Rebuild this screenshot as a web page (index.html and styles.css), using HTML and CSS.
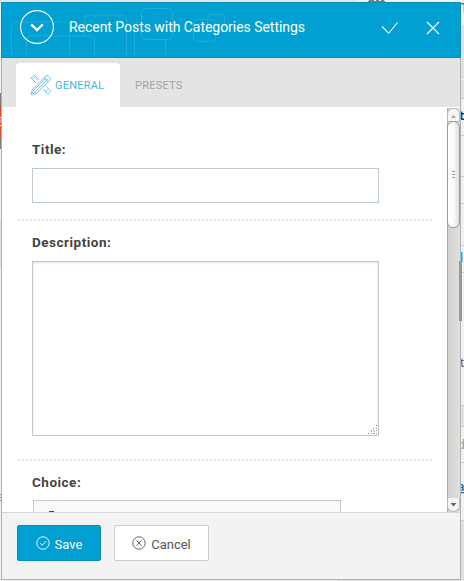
FILE: index.html
```html
<!DOCTYPE html>
<html lang="en">
<head>
<meta charset="utf-8">
<title>Recent Posts with Categories Settings</title>
<link rel="stylesheet" href="styles.css">
</head>
<body>
<svg class="backdrop" width="464" height="581" shape-rendering="crispEdges">
  <rect width="464" height="581" fill="#f1f1f1"/>
  <path fill="#e5e5e5" d="M0 0h357v2H0z"/>
  <path fill="#7b7b7b" d="M369 0h5v1h-5zM376 0h3v1h-3zM381 0h3v1h-3zM368 1h17v1h-17zM0 93h1v56H0z"/>
  <path fill="#dd5027" d="M0 105h1v32H0z"/>
  <path fill="#d38ab5" d="M0 119h1v4H0z"/>
  <path fill="#fff" d="M0 117h1v1H0zM0 125h1v1H0z"/>
  <path fill="#888" d="M0 494h1v1H0zM0 497h1v1H0zM0 500h1v1H0z"/>
  <path fill="#e1e1e1" d="M0 220h1v48H0zM461 26h3v51h-3zM461 80h3v18h-3zM461 406h3v20h-3zM461 521h3v60h-3zM337 580h127v1H337z"/>
  <path fill="#cfcfcf" d="M461 26h3v1h-3zM461 77h3v1h-3zM461 98h3v1h-3zM461 135h3v1h-3zM461 176h3v1h-3zM461 203h3v1h-3zM461 245h3v1h-3zM461 272h3v1h-3zM461 405h3v1h-3zM461 426h3v1h-3zM461 462h3v1h-3zM461 520h3v1h-3z"/>
  <g font-family="Open Sans, sans-serif" font-size="13">
    <text x="461" y="12" fill="#9a553b" font-weight="700">T</text>
    <text x="459" y="120" fill="#123d5d" font-weight="700">t</text>
    <text x="460" y="262" fill="#2478a8">l</text>
    <text x="460" y="367" fill="#8a4938">t</text>
    <text x="457" y="449" fill="#999">d</text>
    <text x="457" y="491" fill="#0073aa" font-weight="600" text-decoration="underline">a</text>
  </g>
</svg>
<main class="dialog">
  <header class="header">
    <svg class="pattern" width="240" height="54" fill="none" stroke="#1eacd9">
      <path d="M10.500 53V24q0-4 4-4h50q4 0 4 4v29M25.500 53V38q0-4 4-4h60q4 0 4 4v15M83.500 34V17q0-4 4-4h34q4 0 4 4v36M133.500 53V24q0-4-4-4h-4"/>
      <rect x="140.500" y="6.500" width="31" height="31" rx="4"/>
      <rect x="192.500" y="17.500" width="22" height="22" rx="4"/>
      <rect x="206.500" y="12.500" width="17" height="17" rx="4"/>
      <path d="M164.500 37v16"/>
    </svg>
    <svg class="toggle" width="36" height="36" fill="none" stroke="#fff">
      <circle cx="18" cy="18" r="16.400" stroke-width="1.100"/>
      <path d="M12.200 15.400l5.800 5.700 5.800-5.700" stroke-width="2.200"/>
    </svg>
    <h1 class="heading">Recent Posts with Categories Settings</h1>
    <svg class="check" width="18" height="14" fill="none" stroke="#fff" stroke-width="1.100"><path d="M1 5.500l6.700 6.800L16.500 1.500"/></svg>
    <svg class="close" width="14" height="14" fill="none" stroke="#fff" stroke-width="1.100"><path d="M1 1l12 12M13 1L1 13"/></svg>
  </header>
  <nav class="tabs">
    <a class="tab active">
      <svg width="22" height="22" viewBox="0 0 22 22" fill="none" stroke="#4fc0e8" stroke-width=".85">
        <path d="M4.200 1.100L1.200 4.100l3 3M4.200 1.100l4.700 4.700M1.200 4.100l5.200 5.200M3.500 3.700l1 1M5.500 2.600L4.200 4M7.400 4.600L6.200 5.900M13.200 15.500l4.700 4.800 3-3-5.100-5.200M15.500 17.900l1.300-1.300M17.500 15.900l-1.300 1.300M14 16.300l1.200-1.200"/>
        <path fill="#fff" d="M1 20.700l1.400-5.300L15.700 2.100q1.400-1.400 2.800 0l1.400 1.400q1.400 1.400 0 2.800L6.500 19.400z"/>
        <path d="M2.400 15.400l4.100 4M4 15.900L16.300 3.600M5.500 17.400L18 5M14 3.800l4.200 4.200M2 18l1.800 1.800"/>
      </svg>
      <span>GENERAL</span>
    </a>
    <a class="tab">PRESETS</a>
  </nav>
  <section class="body">
    <form class="fields">
      <div class="field title"><label>Title:</label><div class="input"></div></div>
      <div class="field description"><label>Description:</label>
        <div class="textarea"><svg width="10" height="10" fill="#999" shape-rendering="crispEdges"><path d="M8 0h1v1H8zM8 3h1v1H8zM8 5h1v1H8zM8 8h1v1H8zM5 3h1v1H5zM5 5h1v1H5zM5 8h1v1H5zM3 5h1v1H3zM3 6h1v1H3zM3 8h1v1H3zM0 8h1v1H0zM6 6h1v1H6zM6 8h1v1H6z"/></svg></div>
      </div>
      <div class="field choice"><label>Choice:</label><div class="select"><i></i></div></div>
    </form>
    <div class="scrollbar">
      <div class="arrow up"><svg width="7" height="4"><path fill="#aaa" d="M1 4l2.500-3L6 4z"/></svg></div>
      <div class="thumb"><i></i><i></i><i></i></div>
      <div class="arrow down"><svg width="7" height="4"><path fill="#666" d="M.5 0l3 3.500 3-3.500z"/></svg></div>
    </div>
  </section>
  <footer class="footer">
    <button class="button save"><svg width="14" height="14" fill="none" stroke="currentColor" stroke-width=".9"><circle cx="7" cy="7" r="6.200"/><path d="M4 7l2.200 2.200L10.300 5"/></svg><span>Save</span></button>
    <button class="button cancel"><svg width="14" height="14" fill="none" stroke="currentColor" stroke-width=".9"><circle cx="7" cy="7" r="6.200"/><path d="M4.500 4.500l5 5M9.500 4.500l-5 5"/></svg><span>Cancel</span></button>
  </footer>
  <div class="page-thumb"></div>
</main>
</body>
</html>
```
FILE: styles.css
```css
* { box-sizing: border-box; }
body { margin: 0; width: 464px; height: 581px; overflow: hidden; font-family: Roboto, "Liberation Sans", sans-serif; }
.backdrop { position: absolute; top: 0; left: 0; }
.dialog { position: relative; width: 460px; height: 578px; margin: 2px 0 0 1px; display: flex; flex-direction: column; border: 1px solid #adb2b9; border-top: 0; background: #fff; }
.header { position: relative; height: 56px; flex: none; margin: 0 -1px; display: flex; align-items: center; padding: 0 20px 6px 18px; background: #00a0d2; border: 1px solid #0890bd; }
.pattern { position: absolute; left: -1px; top: -1px; }
.toggle { position: relative; left: -1px; flex: none; }
.heading { position: relative; margin: 0 auto 0 13px; font-size: 14px; font-weight: 400; line-height: 20px; letter-spacing: -.04px; color: #fff; white-space: nowrap; }
.check { margin: 2px 27px 0 0; }
.close { margin-top: 2px; }
.tabs { height: 49px; flex: none; display: flex; align-items: flex-end; padding-left: 14px; background: #e4e4e4; }
.tab { height: 44px; display: flex; align-items: center; gap: 3px; padding: 0 15px; font-size: 11px; letter-spacing: .22px; color: #a3a3a3; }
.tab.active { width: 104px; padding: 0 0 0 14px; border-radius: 4px 4px 0 0; background: #fff; color: #46b8e0; }
.body { height: 405px; flex: none; display: flex; justify-content: space-between; overflow: hidden; }
.fields { width: 415px; margin-left: 16px; }
.field { padding-left: 14px; background: repeating-linear-gradient(90deg, #e4e4e4 0 2px, transparent 2px 4px) bottom / 100% 2px no-repeat; }
.field label { display: block; font-size: 13.5px; line-height: 16px; font-weight: 700; letter-spacing: .5px; color: #444; }
.title { height: 114px; padding-top: 34px; }
.input { width: 347px; height: 35px; margin-top: 11px; border: 1px solid #bdc8d0; }
.description { height: 240px; padding-top: 13px; }
.textarea { width: 347px; height: 175px; margin-top: 11px; display: flex; justify-content: flex-end; align-items: flex-end; border: 1px solid #c4c6c8; box-shadow: inset 0 1px 3px #e4e4e4; }
.choice { padding-top: 13px; background: none; }
.select { width: 308px; height: 30px; margin: 10px 0 0 1px; padding: 10px 0 0 15px; border: 1px solid #bdc8d0; background: #fafafa; }
.select i { display: block; width: 5px; height: 1px; background: #444; }
.scrollbar { width: 13px; height: 404px; margin-top: 1px; display: flex; flex-direction: column; border-left: 1px solid #aaa9a5; background: linear-gradient(90deg, #d2d1cf, #e2e0de); }
.arrow { height: 13px; flex: none; display: flex; align-items: center; justify-content: center; border: 1px solid #bcbab6; background: #f5f5f4; }
.up { height: 14px; margin: 0 0 -1px -1px; padding-top: 1px; border-radius: 6px 6px 0 0; }
.down { margin: auto 0 0 -1px; height: 14px; border-radius: 0 0 6px 6px; border-top: 0; }
.thumb { height: 107px; flex: none; margin-left: -1px; display: flex; flex-direction: column; align-items: center; justify-content: center; gap: 2px; border: 1px solid #999; border-radius: 6px; background: linear-gradient(90deg, #fff, #fafafa 50%, #dededc); }
.thumb i { width: 3px; height: 1px; background: #999; }
.footer { flex: 1; display: flex; align-items: flex-start; gap: 13px; padding: 12px 15px; border-top: 1px solid #d8d8d8; background: #f3f3f3; }
.button { height: 36px; display: flex; align-items: center; justify-content: center; gap: 5px; padding: 0; border: 1px solid #ccc; border-radius: 2px; font-family: Roboto, "Liberation Sans", sans-serif; font-size: 13px; color: #555; background: #fff; }
.button span { padding-top: 2px; }
.save { width: 84px; border-color: #0890bd; background: #00a0d2; color: #fff; }
.cancel { width: 95px; }
.page-thumb { position: absolute; top: 259px; right: -2px; width: 3px; height: 60px; background: #999; }
```
